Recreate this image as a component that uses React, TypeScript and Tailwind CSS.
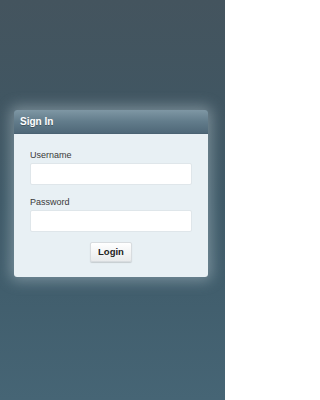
export default function App() {
  return (
    <div
      className="flex h-[400px] w-[225px] flex-col bg-gradient-to-b from-[#44545e] via-[#3d5866] to-[#466575] pt-[110px]"
      style={{ fontFamily: '"Liberation Sans", Arial, sans-serif' }}
    >
      <div className="mx-[14px] w-[194px] overflow-hidden rounded-[3px] shadow-[0_0_14px_4px_rgba(220,235,240,0.35)]">
        <div className="flex h-[24px] items-center border-b border-[#4a6272] bg-gradient-to-b from-[#7f97a4] via-[#627c8b] to-[#4f6878] px-[6px]">
          <span className="text-[10px] font-bold text-white [text-shadow:0_1px_0_rgba(0,0,0,0.3)]">Sign In</span>
        </div>
        <div className="flex flex-col bg-[#e8f0f4] px-[16px] pb-[15px] pt-[16px]">
          <label className="text-[9px] leading-[11px] text-[#3a3a3a]">Username</label>
          <input className="mt-[2px] h-[22px] w-full rounded-[2px] border border-[#dfe6ea] bg-white px-1 text-[10px] outline-none" />
          <label className="mt-[12px] text-[9px] leading-[11px] text-[#3a3a3a]">Password</label>
          <input type="password" className="mt-[2px] h-[22px] w-full rounded-[2px] border border-[#dfe6ea] bg-white px-1 text-[10px] outline-none" />
          <div className="mt-[10px] flex justify-center">
            <button className="h-[20px] rounded-[2px] border border-[#d8dcdf] bg-gradient-to-b from-white to-[#e9ebec] px-[7px] text-[9.5px] font-bold text-[#222] shadow-[0_1px_1px_rgba(0,0,0,0.15)]">
              Login
            </button>
          </div>
        </div>
      </div>
    </div>
  );
}
